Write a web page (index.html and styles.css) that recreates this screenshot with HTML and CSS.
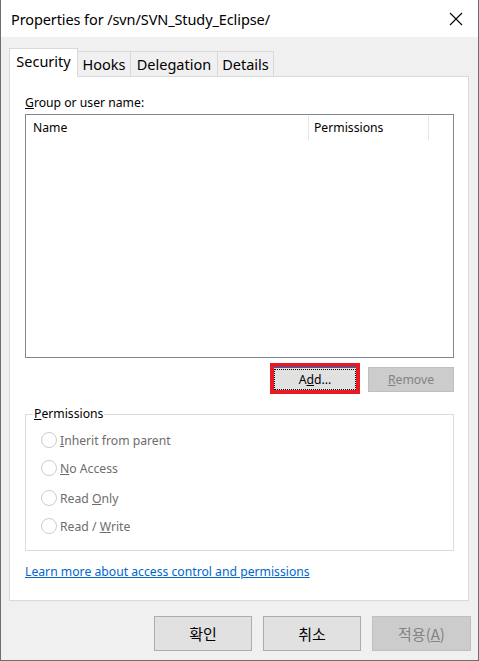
FILE: index.html
```html
<!DOCTYPE html>
<html>
<head>
<meta charset="utf-8">
<link rel="stylesheet" href="styles.css">
</head>
<body>
<div class="window">
  <div class="titlebar">
    <span class="title">Properties for /svn/SVN_Study_Eclipse/</span>
    <svg class="close" width="14" height="14" viewBox="0 0 14 14"><path d="M1 1 L13 13 M13 1 L1 13" stroke="#000" stroke-width="1.1" fill="none"/></svg>
  </div>
  <div class="body">
    <div class="tabs">
      <div class="tab selected tab-security">Security</div>
      <div class="tab tab-hooks">Hooks</div>
      <div class="tab tab-delegation">Delegation</div>
      <div class="tab tab-details">Details</div>
    </div>
    <div class="panel">
      <div class="label"><u>G</u>roup or user name:</div>
      <div class="listbox">
        <div class="list-header">
          <div class="col col-name">Name</div>
          <div class="col col-perm">Permissions</div>
          <div class="col col-rest"></div>
        </div>
      </div>
      <div class="list-buttons">
        <button class="btn btn-add"><span class="focus">A<u>d</u>d...</span><span class="highlight"></span></button>
        <button class="btn btn-disabled btn-remove"><u>R</u>emove</button>
      </div>
      <fieldset class="group">
        <legend class="legend"><u>P</u>ermissions</legend>
        <div class="radio-row"><span class="radio"></span><span class="radio-label"><u>I</u>nherit from parent</span></div>
        <div class="radio-row"><span class="radio"></span><span class="radio-label"><u>N</u>o Access</span></div>
        <div class="radio-row row-3"><span class="radio"></span><span class="radio-label">Read <u>O</u>nly</span></div>
        <div class="radio-row"><span class="radio"></span><span class="radio-label">Read / <u>W</u>rite</span></div>
      </fieldset>
      <a class="link" href="#">Learn more about access control and permissions</a>
    </div>
    <div class="dialog-buttons">
      <button class="dbtn">확인</button>
      <button class="dbtn">취소</button>
      <button class="dbtn dbtn-disabled">적용(<u>A</u>)</button>
    </div>
  </div>
</div>
</body>
</html>
```
FILE: styles.css
```css
* { box-sizing: border-box; }
html, body { margin: 0; padding: 0; background: #f0f0f0; }
body { font-family: "Noto Sans", "Noto Sans CJK KR", sans-serif; color: #000; }

.window {
  width: 479px;
  height: 661px;
  border: 1px solid #6e6e6e;
  border-top: none;
  display: flex;
  flex-direction: column;
  background: #f0f0f0;
}

.titlebar {
  height: 37px;
  background: #fff;
  display: flex;
  align-items: center;
  justify-content: space-between;
  padding: 0 15px 0 10px;
  flex: none;
}
.title { font-size: 14.5px; letter-spacing: -0.1px; }
.close { display: block; margin-top: 1px; }

.body {
  flex: 1;
  padding: 11px 9px 0 8px;
  display: flex;
  flex-direction: column;
}

.tabs {
  display: flex;
  align-items: flex-end;
  height: 29px;
  margin-bottom: -1px;
  position: relative;
  z-index: 1;
}
.tab {
  height: 25px;
  margin-bottom: 1px;
  border: 1px solid #d9d9d9;
  border-bottom: none;
  background: #f0f0f0;
  font-size: 14.5px;
  line-height: 24px;
  text-align: center;
  margin-left: -1px;
}
.tab.selected {
  height: 29px;
  margin-bottom: 0;
  margin-left: 0;
  background: #fff;
  line-height: 24px;
  position: relative;
  z-index: 2;
}
.tab-security { width: 69px; }
.tab-hooks { width: 54px; }
.tab-delegation { width: 88px; }
.tab-details { width: 57px; }

.panel {
  width: 460px;
  height: 525px;
  background: #fff;
  border: 1px solid #d9d9d9;
  padding: 18px 14px 0 15px;
  font-size: 12.2px;
  display: flex;
  flex-direction: column;
  flex: none;
}

.label { height: 16px; line-height: 16px; }

.listbox {
  margin-top: 3px;
  height: 244px;
  border: 1px solid #828790;
  flex: none;
}
.list-header {
  display: flex;
  height: 26px;
  padding-top: 1px;
}
.col {
  height: 24px;
  line-height: 24px;
  border-right: 1px solid #e5e5e5;
}
.col-name { width: 283px; padding-left: 7px; }
.col-perm { width: 120px; padding-left: 5px; }
.col-rest { border-right: none; flex: 1; }

.list-buttons {
  display: flex;
  justify-content: flex-end;
  gap: 10px;
  margin-top: 9px;
  height: 25px;
}
.btn {
  width: 86px;
  height: 25px;
  font-family: inherit;
  font-size: 12.2px;
  border: 1px solid #adadad;
  background: #e1e1e1;
  color: #000;
  padding: 0;
  position: relative;
  display: flex;
  align-items: center;
  justify-content: center;
}
.btn-add { border-color: #0078d7; }
.focus {
  position: absolute;
  left: 1px; right: 1px; top: 1px; bottom: 1px;
  border: 1px dotted #000;
  display: flex;
  align-items: center;
  justify-content: center;
}
.highlight {
  position: absolute;
  left: -3px; right: -3px; top: -5px; bottom: -3px;
  border: 4px solid #e81a24;
}
.btn-disabled {
  background: #cccccc;
  border-color: #bfbfbf;
  color: #838383;
}

.group {
  margin: 14px 0 0 0;
  padding: 4px 0 10px 0;
  border: 1px solid #dcdcdc;
  height: 145px;
  min-width: 0;
}
.legend {
  margin-left: 7px;
  padding: 0 1px;
  line-height: 16px;
  height: 16px;
}
.radio-row {
  height: 28px;
  display: flex;
  align-items: center;
  padding-left: 15px;
  color: #6d6d6d;
}
.row-3 { margin-top: 2px; }
.radio {
  width: 16px;
  height: 16px;
  border: 1px solid #cccccc;
  border-radius: 50%;
  background: #fff;
  margin-right: 3px;
  flex: none;
}

.link {
  margin-top: 13px;
  line-height: 16px;
  color: #0066cc;
  text-decoration: underline;
  align-self: flex-start;
}

.dialog-buttons {
  display: flex;
  justify-content: flex-end;
  gap: 11px;
  margin-top: 15px;
  margin-right: -2px;
}
.dbtn {
  width: 98px;
  height: 35px;
  font-family: "Noto Sans CJK KR", "Noto Sans", sans-serif;
  font-size: 15px;
  border: 1px solid #adadad;
  background: #e1e1e1;
  color: #000;
  padding: 0;
}
.dbtn-disabled {
  width: 99px;
  background: #cccccc;
  border-color: #bfbfbf;
  color: #838383;
}
```
